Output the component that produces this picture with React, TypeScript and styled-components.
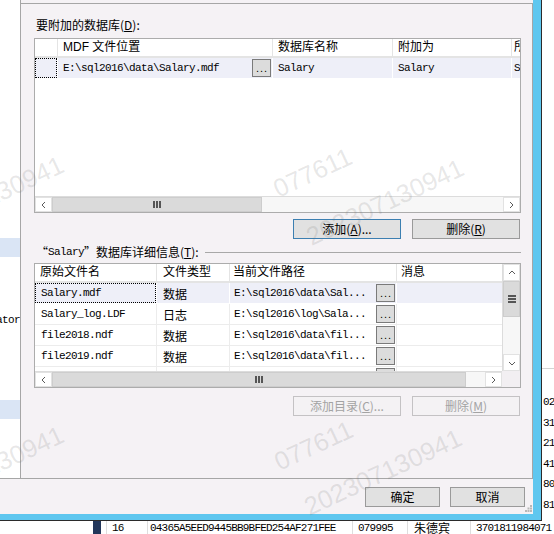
import * as React from 'react'
import styled, { createGlobalStyle } from 'styled-components'

const DIALOG_BG = '#f5f2f5'
const FRAME_BLUE = '#5fc7ef'
const PANEL_LINE = '#a6a6a6'
const UI_FONT = `"Liberation Sans", "Noto Sans CJK SC", sans-serif`
const CJK_FONT = `"Noto Sans CJK SC", "Liberation Sans", sans-serif`
const MONO_FONT = `"Liberation Mono", "Noto Sans CJK SC", monospace`

const GlobalStyle = createGlobalStyle`
    html, body {
        margin: 0;
        padding: 0;
        background: #fff;
    }
    body {
        font-family: ${UI_FONT};
        font-size: 12px;
        color: #000;
    }
`

const Page = styled.div`
    position: relative;
    width: 554px;
    height: 534px;
    overflow: hidden;
    display: grid;
    grid-template-rows: 521px 13px;
    grid-template-columns: 554px;
    background: #fff;
`

const TopRow = styled.div`
    display: flex;
    min-height: 0;
    min-width: 0;
`

const Window = styled.div`
    width: 542px;
    flex-shrink: 0;
    box-sizing: border-box;
    border-right: 1px solid #2b2b2b;
    border-bottom: 1px solid #2b2b2b;
    display: flex;
`

const Chrome = styled.div`
    flex: 1;
    min-width: 0;
    display: flex;
    flex-direction: column;
    background: ${DIALOG_BG};
    border-right: 8px solid ${FRAME_BLUE};
    border-bottom: 6px solid ${FRAME_BLUE};
`

const DialogBody = styled.div`
    height: 479px;
    flex-shrink: 0;
    box-sizing: border-box;
    border-bottom: 1px solid ${PANEL_LINE};
    display: flex;
`

const NavPane = styled.div`
    width: 21px;
    flex-shrink: 0;
    box-sizing: border-box;
    border-right: 1px solid ${PANEL_LINE};
    background: #fff;
    display: flex;
    flex-direction: column;
    padding-top: 238px;
    overflow: hidden;
`

const NavHighlight = styled.div<{ $gap: number }>`
    height: 19px;
    margin-top: ${p => p.$gap}px;
    background: #dae5f5;
`

const NavText = styled.div`
    height: 13px;
    margin-top: 57px;
    display: flex;
    justify-content: flex-end;
    overflow: hidden;
    font: 11px/13px ${MONO_FONT};
    letter-spacing: -0.6px;
    white-space: nowrap;

    span {
        flex-shrink: 0;
    }
`

const ContentWrap = styled.div`
    flex: 1;
    min-width: 0;
    display: flex;
    flex-direction: column;
    padding-top: 3px;
`

const Content = styled.div`
    flex: 1;
    min-width: 0;
    display: flex;
    flex-direction: column;
    border-top: 1px solid ${PANEL_LINE};
    border-right: 1px solid ${PANEL_LINE};
    padding: 0 11px 0 13px;
`

const FieldLabel = styled.div<{ $gap: number }>`
    margin-top: ${p => p.$gap}px;
    height: 16px;
    padding-left: 2px;
    display: flex;
    align-items: center;
    font: 12px/16px ${CJK_FONT};
    white-space: nowrap;
`

const Latin = styled.span`
    font-family: ${MONO_FONT};
    font-size: 11px;
    letter-spacing: -0.6px;
`

const Rule = styled.div`
    flex: 1;
    height: 1px;
    margin-left: 6px;
    background: #a8a8a8;
`

const GridBox = styled.div<{ $h: number; $gap: number }>`
    height: ${p => p.$h}px;
    margin-top: ${p => p.$gap}px;
    flex-shrink: 0;
    min-width: 0;
    box-sizing: border-box;
    border: 1px solid #acacac;
    background: #fff;
    display: flex;
    flex-direction: column;
    overflow: hidden;
`

const GridMain = styled.div`
    flex: 1;
    min-height: 0;
    min-width: 0;
    display: flex;
`

const GridColumns = styled.div`
    flex: 1;
    min-width: 0;
    min-height: 0;
    overflow: hidden;
    display: flex;
    flex-direction: column;
`

const HeaderRow = styled.div`
    display: flex;
    gap: 1px;
    height: 19px;
    flex-shrink: 0;
    box-sizing: border-box;
    padding-bottom: 2px;
    background: #e4e4e4;
`

const HeaderCell = styled.div<{ $w?: number; $pad?: number }>`
    ${p => (p.$w ? `width: ${p.$w}px; flex-shrink: 0;` : 'flex: 1;')}
    box-sizing: border-box;
    padding-left: ${p => p.$pad ?? 5}px;
    background: #fff;
    font: 12px/17px ${UI_FONT};
    white-space: nowrap;
    overflow: hidden;
`

const DataRow = styled.div<{ $selected?: boolean }>`
    display: flex;
    gap: 1px;
    height: 21px;
    flex-shrink: 0;
    box-sizing: border-box;
    padding-bottom: 1px;
    background: ${p => (p.$selected ? '#fff' : '#ececec')};
`

const DataCell = styled.div<{
    $w?: number
    $pad?: number
    $selected?: boolean
    $focus?: boolean
    $cjk?: boolean
}>`
    ${p => (p.$w ? `width: ${p.$w}px; flex-shrink: 0;` : 'flex: 1;')}
    box-sizing: border-box;
    padding-left: ${p => p.$pad ?? 5}px;
    display: flex;
    align-items: center;
    background: ${p => (p.$selected ? '#eeeff8' : '#fff')};
    outline: ${p => (p.$focus ? '1px dotted #000' : 'none')};
    outline-offset: -1px;
    font-family: ${p => (p.$cjk ? CJK_FONT : MONO_FONT)};
    font-size: ${p => (p.$cjk ? 12 : 11)}px;
    letter-spacing: ${p => (p.$cjk ? 0 : -0.6)}px;
    white-space: nowrap;
    overflow: hidden;
`

const BrowseButton = styled.div`
    margin-left: auto;
    margin-right: 1px;
    width: 19px;
    height: 18px;
    flex-shrink: 0;
    box-sizing: border-box;
    border: 1px solid #7a7a7a;
    background: #dcdcdc;
    display: flex;
    align-items: flex-end;
    justify-content: center;
    font: 11px/11px ${UI_FONT};
    letter-spacing: 1px;
    padding: 0 0 2px 1px;
`

const HScroll = styled.div`
    flex: 1;
    min-width: 0;
    height: 16px;
    display: flex;
    background: #f7f7f7;
    border-top: 1px solid #dcdcdc;
    box-sizing: border-box;
`

const VScroll = styled.div`
    width: 18px;
    flex-shrink: 0;
    box-sizing: border-box;
    border-left: 1px solid #dcdcdc;
    display: flex;
    flex-direction: column;
    background: #f7f7f7;
`

const ScrollArrow = styled.div<{ $vertical?: boolean }>`
    ${p => (p.$vertical ? 'height: 17px;' : 'width: 17px;')}
    flex-shrink: 0;
    box-sizing: border-box;
    background: #fff;
    border: 1px solid #e2e2e2;
    display: flex;
    align-items: center;
    justify-content: center;
`

const Thumb = styled.div<{ $size: number; $vertical?: boolean }>`
    ${p => (p.$vertical ? `height: ${p.$size}px;` : `width: ${p.$size}px;`)}
    flex-shrink: 0;
    box-sizing: border-box;
    background: #dadada;
    border: 1px solid #cdcdcd;
    display: flex;
    align-items: center;
    justify-content: center;
`

const Track = styled.div`
    flex: 1;
`

const ScrollBottom = styled.div`
    display: flex;
    flex-shrink: 0;
    min-width: 0;
`

const Corner = styled.div`
    width: 18px;
    height: 16px;
    flex-shrink: 0;
    background: #f2eff2;
`

const ButtonRow = styled.div<{ $gap: number }>`
    margin-top: ${p => p.$gap}px;
    display: flex;
    justify-content: flex-end;
    gap: 11px;
    padding-right: 1px;
`

type Tone = 'default' | 'normal' | 'disabled'

const Button = styled.div<{ $w: number; $tone?: Tone }>`
    width: ${p => p.$w}px;
    height: 20px;
    flex-shrink: 0;
    box-sizing: border-box;
    border: 1px solid
        ${p => (p.$tone === 'default' ? '#3c7fb1' : p.$tone === 'disabled' ? '#c4c2c4' : '#9a9a9a')};
    background: ${p => (p.$tone === 'disabled' ? '#f4f2f4' : '#e1e1e1')};
    color: ${p => (p.$tone === 'disabled' ? '#a3a3a3' : '#000')};
    font: 12px/18px ${CJK_FONT};
    text-align: center;
    white-space: nowrap;
`

const Footer = styled.div`
    flex: 1;
    position: relative;
    display: flex;
    justify-content: flex-end;
    align-items: flex-start;
    gap: 10px;
    padding: 8px 8px 0 0;
`

const Grip = styled.svg`
    position: absolute;
    right: 1px;
    bottom: 2px;
`

const SideApp = styled.div`
    flex: 1;
    min-width: 0;
    background: #fff;
    display: flex;
    flex-direction: column;
    padding-top: 368px;
    overflow: hidden;
`

const SideRule = styled.div`
    height: 1px;
    flex-shrink: 0;
    background: #d4d4d4;
    margin-bottom: 23px;
`

const SideRow = styled.div`
    height: 20.6px;
    flex-shrink: 0;
    line-height: 20.6px;
    font-family: ${MONO_FONT};
    font-size: 11px;
    letter-spacing: -0.8px;
    padding-left: 1px;
    white-space: nowrap;
`

const Strip = styled.div`
    display: flex;
    min-width: 0;
    background: #fff;
    overflow: hidden;
    font: 11px/12px ${MONO_FONT};
    letter-spacing: -0.8px;
    white-space: nowrap;
`

const StripSpacer = styled.div<{ $w: number }>`
    width: ${p => p.$w}px;
    flex-shrink: 0;
`

const StripMarker = styled.div`
    width: 8px;
    flex-shrink: 0;
    background: #22365a;
`

const StripCell = styled.div<{ $w?: number; $pad: number; $cjk?: boolean }>`
    ${p => (p.$w ? `width: ${p.$w}px; flex-shrink: 0;` : 'flex: 1; min-width: 0;')}
    box-sizing: border-box;
    border-left: 1px solid #dedede;
    padding: 1px 0 0 ${p => p.$pad}px;
    overflow: hidden;
    ${p => (p.$cjk ? `font-family: ${CJK_FONT}; font-size: 12px; letter-spacing: 0;` : '')}
`

const WatermarkLayer = styled.div`
    position: absolute;
    inset: 0;
    pointer-events: none;
    overflow: hidden;
`

const Mark = styled.span<{ $x: number; $y: number }>`
    position: absolute;
    left: ${p => p.$x}px;
    top: ${p => p.$y - 22}px;
    transform-origin: 0 22px;
    transform: rotate(-25deg);
    font: 25.5px/25.5px "Liberation Sans", sans-serif;
    color: rgba(110, 110, 110, 0.17);
    white-space: nowrap;
`

const CHEVRONS = {
    left: '5,1 2,4 5,7',
    right: '2,1 5,4 2,7',
    up: '1,5 4,2 7,5',
    down: '1,3 4,6 7,3',
}

const Chevron = ({ dir }: { dir: keyof typeof CHEVRONS }) => (
    <svg width="8" height="8" viewBox="0 0 8 8">
        <polyline points={CHEVRONS[dir]} fill="none" stroke="#5a5a5a" strokeWidth="1" />
    </svg>
)

const GripLines = ({ vertical }: { vertical?: boolean }) =>
    vertical ? (
        <svg width="8" height="8" viewBox="0 0 8 8">
            <rect x="0" y="0" width="8" height="2" fill="#555" />
            <rect x="0" y="3" width="8" height="2" fill="#555" />
            <rect x="0" y="6" width="8" height="2" fill="#555" />
        </svg>
    ) : (
        <svg width="8" height="7" viewBox="0 0 8 7">
            <rect x="0" y="0" width="2" height="7" fill="#555" />
            <rect x="3" y="0" width="2" height="7" fill="#555" />
            <rect x="6" y="0" width="2" height="7" fill="#555" />
        </svg>
    )

const HorizontalScroll = ({ thumb }: { thumb: number }) => (
    <HScroll>
        <ScrollArrow>
            <Chevron dir="left" />
        </ScrollArrow>
        <Thumb $size={thumb}>
            <GripLines />
        </Thumb>
        <Track />
        <ScrollArrow>
            <Chevron dir="right" />
        </ScrollArrow>
    </HScroll>
)

const Browse = () => <BrowseButton>...</BrowseButton>

const detailFiles = [
    { name: 'Salary.mdf', type: '数据', path: 'E:\\sql2016\\data\\Sal...' },
    { name: 'Salary_log.LDF', type: '日志', path: 'E:\\sql2016\\log\\Sala...' },
    { name: 'file2018.ndf', type: '数据', path: 'E:\\sql2016\\data\\fil...' },
    { name: 'file2019.ndf', type: '数据', path: 'E:\\sql2016\\data\\fil...' },
    { name: 'file2020.ndf', type: '数据', path: 'E:\\sql2016\\data\\fil...' },
]

const sideValues = ['02', '31', '21', '41', '80', '81']

// watermark baselines, start point of each line
const marks = [
    { text: '202307130941', x: 310, y: 517 },
    { text: '202307130941', x: 312, y: 247 },
    { text: '077611', x: 280, y: 472 },
    { text: '077611', x: 279, y: 199 },
    { text: '202307130941', x: -88, y: 514 },
    { text: '202307130941', x: -88, y: 244 },
]

export default function App() {
    return (
        <>
            <GlobalStyle />
            <Page>
                <TopRow>
                    <Window>
                        <Chrome>
                            <DialogBody>
                                <NavPane>
                                    <NavHighlight $gap={0} />
                                    <NavText>
                                        <span>Administrator</span>
                                    </NavText>
                                    <NavHighlight $gap={73} />
                                </NavPane>
                                <ContentWrap>
                                    <Content>
                                        <FieldLabel $gap={13}>
                                            要附加的数据库(<u>D</u>):
                                        </FieldLabel>
                                        <GridBox $h={175} $gap={5}>
                                            <GridColumns>
                                                <HeaderRow>
                                                    <HeaderCell $w={22} />
                                                    <HeaderCell $w={214}>MDF 文件位置</HeaderCell>
                                                    <HeaderCell $w={119}>数据库名称</HeaderCell>
                                                    <HeaderCell $w={118}>附加为</HeaderCell>
                                                    <HeaderCell $w={120} $pad={2}>
                                                        所有者
                                                    </HeaderCell>
                                                </HeaderRow>
                                                <DataRow $selected>
                                                    <DataCell $w={22} $selected $focus />
                                                    <DataCell $w={214} $selected>
                                                        E:\sql2016\data\Salary.mdf
                                                        <Browse />
                                                    </DataCell>
                                                    <DataCell $w={119} $selected>
                                                        Salary
                                                    </DataCell>
                                                    <DataCell $w={118} $selected>
                                                        Salary
                                                    </DataCell>
                                                    <DataCell $w={120} $pad={2} $selected>
                                                        Salary
                                                    </DataCell>
                                                </DataRow>
                                            </GridColumns>
                                            <ScrollBottom>
                                                <HorizontalScroll thumb={210} />
                                            </ScrollBottom>
                                        </GridBox>
                                        <ButtonRow $gap={6}>
                                            <Button $w={108} $tone="default">
                                                添加(<u>A</u>)...
                                            </Button>
                                            <Button $w={108} $tone="normal">
                                                删除(<u>R</u>)
                                            </Button>
                                        </ButtonRow>
                                        <FieldLabel $gap={5}>
                                            “<Latin>Salary</Latin>”数据库详细信息(<u>T</u>):
                                            <Rule />
                                        </FieldLabel>
                                        <GridBox $h={125} $gap={3}>
                                            <GridMain>
                                                <GridColumns>
                                                    <HeaderRow>
                                                        <HeaderCell $w={121}>原始文件名</HeaderCell>
                                                        <HeaderCell $w={72} $pad={6}>
                                                            文件类型
                                                        </HeaderCell>
                                                        <HeaderCell $w={166} $pad={3}>
                                                            当前文件路径
                                                        </HeaderCell>
                                                        <HeaderCell $pad={4}>消息</HeaderCell>
                                                    </HeaderRow>
                                                    {detailFiles.map((f, i) => (
                                                        <DataRow key={f.name} $selected={i === 0}>
                                                            <DataCell
                                                                $w={121}
                                                                $pad={6}
                                                                $selected={i === 0}
                                                                $focus={i === 0}
                                                            >
                                                                {f.name}
                                                            </DataCell>
                                                            <DataCell
                                                                $w={72}
                                                                $pad={6}
                                                                $selected={i === 0}
                                                                $cjk
                                                            >
                                                                {f.type}
                                                            </DataCell>
                                                            <DataCell
                                                                $w={166}
                                                                $pad={4}
                                                                $selected={i === 0}
                                                            >
                                                                {f.path}
                                                                <Browse />
                                                            </DataCell>
                                                            <DataCell $selected={i === 0} />
                                                        </DataRow>
                                                    ))}
                                                </GridColumns>
                                                <VScroll>
                                                    <ScrollArrow $vertical>
                                                        <Chevron dir="up" />
                                                    </ScrollArrow>
                                                    <Thumb $size={36} $vertical>
                                                        <GripLines vertical />
                                                    </Thumb>
                                                    <Track />
                                                    <ScrollArrow $vertical>
                                                        <Chevron dir="down" />
                                                    </ScrollArrow>
                                                </VScroll>
                                            </GridMain>
                                            <ScrollBottom>
                                                <HorizontalScroll thumb={414} />
                                                <Corner />
                                            </ScrollBottom>
                                        </GridBox>
                                        <ButtonRow $gap={8}>
                                            <Button $w={108} $tone="disabled">
                                                添加目录(<u>C</u>)...
                                            </Button>
                                            <Button $w={108} $tone="disabled">
                                                删除(<u>M</u>)
                                            </Button>
                                        </ButtonRow>
                                    </Content>
                                </ContentWrap>
                            </DialogBody>
                            <Footer>
                                <Button $w={75}>确定</Button>
                                <Button $w={75}>取消</Button>
                                <Grip width="7" height="7" viewBox="0 0 7 7">
                                    <rect x="5" y="0" width="2" height="2" fill="#b8b8b8" />
                                    <rect x="2.5" y="2.5" width="2" height="2" fill="#b8b8b8" />
                                    <rect x="5" y="2.5" width="2" height="2" fill="#b8b8b8" />
                                    <rect x="0" y="5" width="2" height="2" fill="#b8b8b8" />
                                    <rect x="2.5" y="5" width="2" height="2" fill="#b8b8b8" />
                                    <rect x="5" y="5" width="2" height="2" fill="#b8b8b8" />
                                </Grip>
                            </Footer>
                        </Chrome>
                    </Window>
                    <SideApp>
                        <SideRule />
                        {sideValues.map(v => (
                            <SideRow key={v}>{v}</SideRow>
                        ))}
                    </SideApp>
                </TopRow>
                <Strip>
                    <StripSpacer $w={93} />
                    <StripMarker />
                    <StripSpacer $w={5} />
                    <StripCell $w={41} $pad={5}>
                        16
                    </StripCell>
                    <StripCell $w={205} $pad={2}>
                        04365A5EED9445BB9BFED254AF271FEE
                    </StripCell>
                    <StripCell $w={55} $pad={5}>
                        079995
                    </StripCell>
                    <StripCell $w={63} $pad={6} $cjk>
                        朱德宾
                    </StripCell>
                    <StripCell $pad={5}>3701811984071</StripCell>
                </Strip>
                <WatermarkLayer>
                    {marks.map(m => (
                        <Mark key={`${m.text}-${m.x}-${m.y}`} $x={m.x} $y={m.y}>
                            {m.text}
                        </Mark>
                    ))}
                </WatermarkLayer>
            </Page>
        </>
    )
}
